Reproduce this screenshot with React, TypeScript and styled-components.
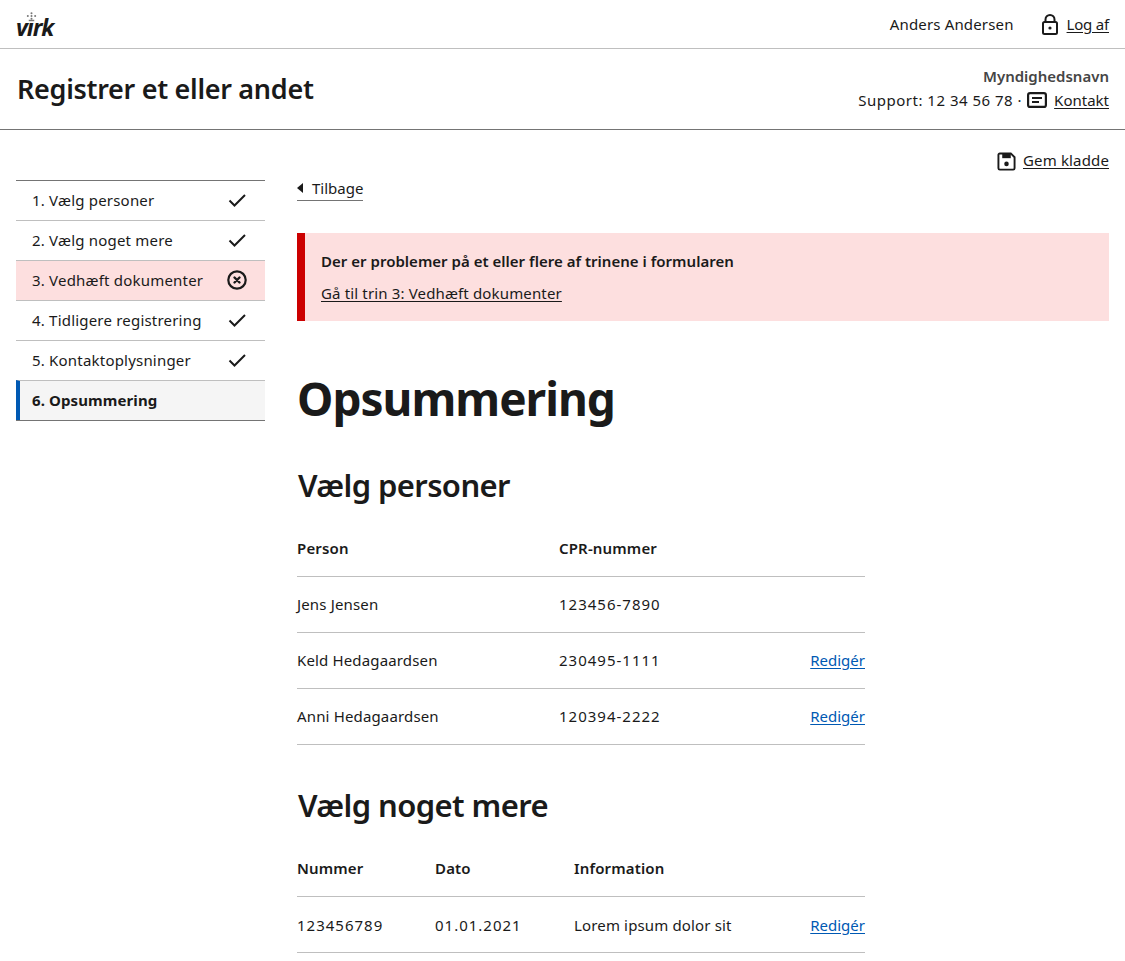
import React from "react";
import styled, { createGlobalStyle } from "styled-components";

const Global = createGlobalStyle`
  html, body { margin: 0; padding: 0; background: #fff; }
  body { font-family: "Noto Sans", "Liberation Sans", sans-serif; color: #1a1a1a; font-size: 15px; letter-spacing: 0.15px; }
  * { box-sizing: border-box; }
`;

const Page = styled.div`width: 1125px; height: 961px; overflow: hidden;`;
const PortalBar = styled.header`
  height: 49px; border-bottom: 1px solid #bfbfbf; padding: 0 16px;
  display: flex; align-items: center; justify-content: space-between;
`;
const Logo = styled.div`position: relative; width: 39px; height: 30px;`;
const LogoText = styled.span`
  position: absolute; left: 0; bottom: 0; font: italic 700 23px/24px "Noto Sans", sans-serif; letter-spacing: -1px;
`;
const Crown = styled.svg`position: absolute; left: 10px; top: 3px;`;
const UserArea = styled.div`display: flex; align-items: center;`;
const UserName = styled.span`margin-right: 28px;`;
const IconLink = styled.a`
  display: inline-flex; align-items: center; gap: 7px; color: #1a1a1a;
  span { text-decoration: underline; text-underline-offset: 2px; }
`;
const LogoutLink = styled(IconLink)`
  gap: 9px;
  span { letter-spacing: -0.2px; }
`;
const ContactLink = styled(IconLink)`
  span { letter-spacing: 0; }
`;
const SaveIcon = styled.svg`margin-top: 2px;`;
const SolutionBar = styled.div`
  height: 81px; border-bottom: 1px solid #747474; padding: 0 16px;
  display: flex; align-items: center; justify-content: space-between;
`;
const SolutionTitle = styled.h1`margin: 0 0 0 1px; font-size: 27px; line-height: 36px; font-weight: 600; letter-spacing: -0.3px;`;
const Authority = styled.div`display: flex; flex-direction: column; align-items: flex-end; margin-top: -2px;`;
const AuthorityName = styled.strong`font-weight: 600; color: #454545; line-height: 24px; letter-spacing: 0;`;
const SupportLine = styled.div`display: flex; align-items: center; gap: 5px; line-height: 24px;`;
const SupportText = styled.span`letter-spacing: 0.5px;`;
const Body = styled.div`display: flex; padding: 0 16px; gap: 32px;`;
const Side = styled.nav`width: 249px; flex: none; margin-top: 50px;`;
const StepList = styled.ul`list-style: none; margin: 0; padding: 0; border-bottom: 1px solid #747474;`;
const Step = styled.li<{ $state?: "error" | "active" }>`
  height: 40px; display: flex; align-items: center; justify-content: space-between;
  padding: 0 16px 2px; border-top: 1px solid #bfbfbf; letter-spacing: 0.2px;
  &:first-child { border-top-color: #747474; }
  background: ${(p) => (p.$state === "error" ? "#fddfdf" : p.$state === "active" ? "#f5f5f5" : "#fff")};
  ${(p) => p.$state === "active" && "font-weight: 700; border-left: 4px solid #0059b3; padding-left: 12px; letter-spacing: 0.1px;"}
`;
const Main = styled.main`flex: 1; min-width: 0;`;
const DraftRow = styled.div`display: flex; justify-content: flex-end; height: 44px; padding-top: 16px;`;
const Back = styled.a`
  display: inline-flex; align-items: center; gap: 9px; height: 26px;
  border-bottom: 1px solid #747474; color: #1a1a1a; margin-top: 1px; letter-spacing: 0;
`;
const Alert = styled.div`
  margin-top: 32px; height: 88px; background: #fddfdf; border-left: 8px solid #c00;
  padding: 16px; display: flex; flex-direction: column; gap: 8px; line-height: 24px;
`;
const AlertTitle = styled.strong`font-weight: 600; letter-spacing: 0.02px;`;
const AlertLink = styled.a`color: #1a1a1a; text-decoration: underline; text-underline-offset: 2px;`;
const PageTitle = styled.h2`margin: 45px 0 0; font-size: 46px; line-height: 64px; font-weight: 700; letter-spacing: -1px;`;
const Section = styled.h3`margin: 31px 0 0 1px; font-size: 31px; line-height: 48px; font-weight: 600; letter-spacing: -0.6px;`;
const Table = styled.table<{ $top: number }>`
  width: 568px; margin: ${(p) => p.$top}px 0 36px; border-collapse: collapse; table-layout: fixed;
`;
const Th = styled.th<{ $w?: number }>`
  height: 56px; text-align: left; font-weight: 600; padding: 0; border-bottom: 1px solid #bfbfbf;
  width: ${(p) => (p.$w ? p.$w + "px" : "auto")};
`;
const Td = styled.td<{ $right?: boolean; $num?: boolean }>`
  height: 56px; padding: 0; border-bottom: 1px solid #bfbfbf; text-align: ${(p) => (p.$right ? "right" : "left")};
  ${(p) => p.$num && "letter-spacing: 1px;"}
`;
const Edit = styled.a`color: #0059b3; text-decoration: underline; text-underline-offset: 2px; letter-spacing: 0;`;

const Check = () => (
  <svg width="24" height="24" viewBox="0 0 24 24" fill="none" stroke="#1a1a1a" strokeWidth="2"><path d="M4.5 12.5l5 5L20 7" /></svg>
);
const ErrIcon = () => (
  <svg width="24" height="24" viewBox="0 0 24 24" fill="none" stroke="#1a1a1a" strokeWidth="2.2"><circle cx="12" cy="12" r="8.7" /><path d="M9.5 9.5l5 5M14.5 9.5l-5 5" strokeWidth="2.4" strokeLinecap="round" /></svg>
);

const steps: { t: string; s?: "error" | "active" }[] = [
  { t: "1. Vælg personer" }, { t: "2. Vælg noget mere" }, { t: "3. Vedhæft dokumenter", s: "error" },
  { t: "4. Tidligere registrering" }, { t: "5. Kontaktoplysninger" }, { t: "6. Opsummering", s: "active" },
];

export default function App() {
  return (
    <Page>
      <Global />
      <PortalBar>
        <Logo>
          <Crown width="11" height="10" viewBox="0 0 12 10" fill="#777">
            <circle cx="6" cy="1" r="1.1" /><circle cx="2" cy="4" r="1.1" /><circle cx="6" cy="4" r="1.1" /><circle cx="10" cy="4" r="1.1" /><circle cx="6" cy="7" r="1.1" /><rect x="3" y="8" width="6" height="1.6" />
          </Crown>
          <LogoText>vırk</LogoText>
        </Logo>
        <UserArea>
          <UserName>Anders Andersen</UserName>
          <LogoutLink>
            <svg width="16" height="21" viewBox="0 0 16 21" fill="none" stroke="#1a1a1a" strokeWidth="2"><rect x="1" y="8" width="14" height="12" rx="1.5" /><path d="M3.5 8V5.5a4.5 4.5 0 019 0V8" /><circle cx="8" cy="14" r="1.6" fill="#1a1a1a" stroke="none" /></svg>
            <span>Log af</span>
          </LogoutLink>
        </UserArea>
      </PortalBar>
      <SolutionBar>
        <SolutionTitle>Registrer et eller andet</SolutionTitle>
        <Authority>
          <AuthorityName>Myndighedsnavn</AuthorityName>
          <SupportLine>
            <SupportText>Support: 12 34 56 78 ·</SupportText>
            <ContactLink>
              <svg width="20" height="16" viewBox="0 0 20 16" fill="none" stroke="#1a1a1a" strokeWidth="2.2"><rect x="1.1" y="1.1" width="17.8" height="13.8" rx="2" /><path d="M5 6h10M5 10h7" strokeWidth="2" /></svg>
              <span>Kontakt</span>
            </ContactLink>
          </SupportLine>
        </Authority>
      </SolutionBar>
      <Body>
        <Side>
          <StepList>
            {steps.map((s) => (
              <Step key={s.t} $state={s.s}>
                {s.t}
                {s.s === "error" ? <ErrIcon /> : s.s === "active" ? null : <Check />}
              </Step>
            ))}
          </StepList>
        </Side>
        <Main>
          <DraftRow>
            <IconLink>
              <SaveIcon width="19" height="19" viewBox="0 0 20 20" fill="none" stroke="#1a1a1a" strokeWidth="2"><path d="M3 1.5h11.5l4 4V17a1.5 1.5 0 01-1.5 1.5H3A1.5 1.5 0 011.5 17V3A1.5 1.5 0 013 1.5z" /><path d="M5.5 2h9v4.5h-9z" fill="#1a1a1a" stroke="none" /><circle cx="10" cy="12.5" r="2.4" fill="#1a1a1a" stroke="none" /></SaveIcon>
              <span>Gem kladde</span>
            </IconLink>
          </DraftRow>
          <Back>
            <svg width="6" height="10" viewBox="0 0 6 10" fill="#1a1a1a"><path d="M6 0v10L0 5z" /></svg>
            Tilbage
          </Back>
          <Alert>
            <AlertTitle>Der er problemer på et eller flere af trinene i formularen</AlertTitle>
            <AlertLink>Gå til trin 3: Vedhæft dokumenter</AlertLink>
          </Alert>
          <PageTitle>Opsummering</PageTitle>
          <Section>Vælg personer</Section>
          <Table $top={11}>
            <thead><tr><Th $w={262}>Person</Th><Th $w={200}>CPR-nummer</Th><Th /></tr></thead>
            <tbody>
              <tr><Td>Jens Jensen</Td><Td $num>123456-7890</Td><Td /></tr>
              <tr><Td>Keld Hedagaardsen</Td><Td $num>230495-1111</Td><Td $right><Edit>Redigér</Edit></Td></tr>
              <tr><Td>Anni Hedagaardsen</Td><Td $num>120394-2222</Td><Td $right><Edit>Redigér</Edit></Td></tr>
            </tbody>
          </Table>
          <Section>Vælg noget mere</Section>
          <Table $top={12}>
            <thead><tr><Th $w={138}>Nummer</Th><Th $w={139}>Dato</Th><Th $w={200}>Information</Th><Th /></tr></thead>
            <tbody>
              <tr><Td $num>123456789</Td><Td $num>01.01.2021</Td><Td>Lorem ipsum dolor sit</Td><Td $right><Edit>Redigér</Edit></Td></tr>
            </tbody>
          </Table>
        </Main>
      </Body>
    </Page>
  );
}
